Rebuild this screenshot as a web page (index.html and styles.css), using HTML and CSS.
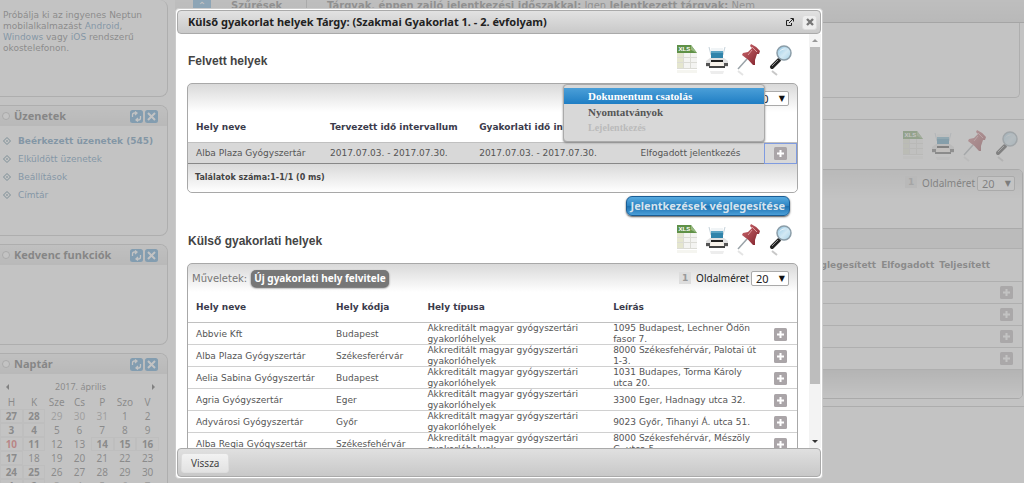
FILE: index.html
```html
<!DOCTYPE html>
<html lang="hu">
<head>
<meta charset="utf-8">
<title>Külső gyakorlat helyek</title>
<link rel="stylesheet" href="styles.css">
</head>
<body>
<svg class="sprite" aria-hidden="true">
  <defs>
    <linearGradient id="lens" x1="0" y1="0" x2="1" y2="1"><stop offset="0" stop-color="#8fc4e2"/><stop offset=".55" stop-color="#d3e9f4"/><stop offset="1" stop-color="#a4cfe6"/></linearGradient>
    <linearGradient id="pinred" x1="0" y1="0" x2="1" y2="1"><stop offset="0" stop-color="#cf6a70"/><stop offset="1" stop-color="#7e2029"/></linearGradient>
    <symbol id="i-xls" viewBox="0 0 20 34">
      <path d="M0 9h20v16H0z" fill="#f4f4f2"/>
      <path d="M0 9h6v16H0z" fill="#e5e6cf"/>
      <path d="M0 13.5h20M0 18.500h20M0 24.500h20M6.500 9v16M13.500 9v16" stroke="#dcdcd6" fill="none"/>
      <path d="M0 1h14l6 8H0z" fill="#5f9147"/><path d="M14 1v5l6 3z" fill="#94b87f"/>
      <text x="1.500" y="7" class="xls-text">XLS</text>
      <path d="M0 26h20v3H0z" fill="#efefe6" opacity=".6"/>
    </symbol>
    <symbol id="i-print" viewBox="0 0 24 34">
      <path d="M4 3l2 8M20 3l-2 8" stroke="#c5d2da" fill="none"/>
      <path d="M6 4h12v4H6z" fill="#f0f4f6"/><path d="M6 7h12v7H6z" fill="#3184ab"/><path d="M6 7h12v2H6z" fill="#5ca4c4"/>
      <path d="M5 14h14l4 3v6H1v-6z" fill="#e2e2e2"/><path d="M1 19h4v3H1zM19 19h4v3h-4z" fill="#555"/>
      <path d="M6 16h12v2H6z" fill="#222"/><path d="M6 18h12l1 4H5z" fill="#f7f2ea"/><path d="M4 22h16v2H4z" fill="#444"/>
      <path d="M5 27h14l-1 3H6z" fill="#ededed"/>
    </symbol>
    <symbol id="i-pin" viewBox="0 0 24 34">
      <path d="M1 25L10 15" stroke="#9aa3a8" stroke-width="1.500"/>
      <path d="M14 0q5 2 9 7l-1 3h-2l-2 6v5h-2Q11 15 5 11l1-2 5-1 4-4-2-2z" fill="url(#pinred)"/>
      <path d="M15 3l5 5M15 6l-4 5" stroke="#e09a9d" fill="none"/>
      <path d="M1 27l5 4" stroke="#e4e4e4" stroke-width="2"/>
    </symbol>
    <symbol id="i-find" viewBox="0 0 24 34">
      <path d="M3 23l7-7" stroke="#222" stroke-width="4" stroke-linecap="round"/><path d="M3 22l6-6" stroke="#999"/>
      <circle cx="15" cy="9" r="7" fill="url(#lens)" stroke="#8b9da8" stroke-width="1.500"/>
      <path d="M10 9q2-6 8-4-6 0-8 4z" fill="#fff" opacity=".8"/>
      <path d="M3 27l5 4" stroke="#c8c8c8" stroke-width="2"/>
    </symbol>
    <symbol id="i-refresh" viewBox="0 0 13 13"><rect width="13" height="13" rx="2.500" fill="#297fc0"/><path d="M2.500 7V5q0-2 2-2h2M5 1.500L7 3 5 5M10.500 6v2q0 2-2 2h-2M8 8L6 10l2 1.500" stroke="#fff" fill="none" stroke-width="1.300"/></symbol>
    <symbol id="i-close" viewBox="0 0 13 13"><rect width="13" height="13" rx="2.500" fill="#297fc0"/><path d="M3 3l7 7M10 3l-7 7" stroke="#fff" stroke-width="2"/></symbol>
    <symbol id="i-bullet" viewBox="0 0 8 8"><path d="M4 .5L7.500 4 4 7.500 .5 4z" fill="#fff" stroke="#0d4a66"/><path d="M4 3L5 4 4 5 3 4z" fill="#0d4a66"/></symbol>
    <symbol id="i-plus" viewBox="0 0 13 13"><rect width="13" height="13" rx="1.500" fill="#aaa5a8"/><path d="M6.500 3v7M3 6.500h7" stroke="#fff" stroke-width="2"/></symbol>
  </defs>
</svg>

<div class="page">
  <aside class="side">
    <section class="widget first">
      <p>Próbálja ki az ingyenes Neptun mobilalkalmazást <a href="#">Android</a>, <a href="#">Windows</a> vagy <a href="#">iOS</a> rendszerű okostelefonon.</p>
    </section>
    <section class="widget messages">
      <header><i class="dot"></i><h3>Üzenetek</h3><svg><use href="#i-refresh"/></svg><svg><use href="#i-close"/></svg></header>
      <ul>
        <li><svg><use href="#i-bullet"/></svg><a href="#"><b>Beérkezett üzenetek (545)</b></a></li>
        <li><svg><use href="#i-bullet"/></svg><a href="#">Elküldött üzenetek</a></li>
        <li><svg><use href="#i-bullet"/></svg><a href="#">Beállítások</a></li>
        <li><svg><use href="#i-bullet"/></svg><a href="#">Címtár</a></li>
      </ul>
    </section>
    <section class="widget favourites">
      <header><i class="dot"></i><h3>Kedvenc funkciók</h3><svg><use href="#i-refresh"/></svg><svg><use href="#i-close"/></svg></header>
    </section>
    <section class="widget calendar">
      <header><i class="dot"></i><h3>Naptár</h3><svg><use href="#i-refresh"/></svg><svg><use href="#i-close"/></svg></header>
      <div class="month"><i class="prev"></i><span>2017. április</span><i class="next"></i></div>
      <table>
        <thead><tr><th>H</th><th>K</th><th>Sze</th><th>Cs</th><th>P</th><th>Szo</th><th>V</th></tr></thead>
        <tbody>
          <tr><td class="ev">27</td><td class="ev">28</td><td class="off">29</td><td class="off">30</td><td class="off">31</td><td>1</td><td>2</td></tr>
          <tr><td class="ev">3</td><td class="ev">4</td><td>5</td><td>6</td><td>7</td><td>8</td><td>9</td></tr>
          <tr><td class="ev today">10</td><td class="ev">11</td><td>12</td><td>13</td><td class="ev">14</td><td class="ev">15</td><td class="ev">16</td></tr>
          <tr><td class="ev">17</td><td>18</td><td>19</td><td>20</td><td>21</td><td>22</td><td>23</td></tr>
          <tr><td class="ev">24</td><td class="ev">25</td><td>26</td><td>27</td><td>28</td><td>29</td><td>30</td></tr>
          <tr><td class="ev">1</td><td class="ev">2</td><td class="off">3</td><td class="off">4</td><td class="off">5</td><td class="off">6</td><td class="off">7</td></tr>
        </tbody>
      </table>
    </section>
  </aside>
  <main class="main">
    <div class="filters"><span class="toggle">⌃</span><b class="filter-title">Szűrések</b><span class="filter-text"><b>Tárgyak, éppen zajló jelentkezési időszakkal:</b> Igen <b>Jelentkezett tárgyak:</b> Nem</span></div>
    <div class="filter-body"></div>
    <div class="courses">
      <div class="tools"><svg class="xls"><use href="#i-xls"/></svg><svg><use href="#i-print"/></svg><svg><use href="#i-pin"/></svg><svg><use href="#i-find"/></svg></div>
      <div class="bg-panel">
        <div class="bg-bar"><span class="pageno">1</span><label for="size-bg">Oldalméret</label><span class="select"><select id="size-bg"><option>20</option></select></span></div>
        <div class="bg-band"></div>
        <div class="bg-head"><span>Véglegesített</span><span>Elfogadott</span><span>Teljesített</span></div>
        <div class="bg-row"><svg><use href="#i-plus"/></svg></div>
        <div class="bg-row"><svg><use href="#i-plus"/></svg></div>
        <div class="bg-row"><svg><use href="#i-plus"/></svg></div>
        <div class="bg-row"><svg><use href="#i-plus"/></svg></div>
        <div class="bg-foot"></div>
      </div>
    </div>
  </main>
</div>

<div class="overlay">
  <div class="dialog" role="dialog" aria-labelledby="dlg-title">
    <div class="titlebar">
      <h1 id="dlg-title">Külső gyakorlat helyek Tárgy: (Szakmai Gyakorlat 1. - 2. évfolyam)</h1>
      <button class="popout" aria-label="Új ablak"><svg viewBox="0 0 8 8"><path d="M3 2.500H.5v5h5V5M3 5l4-4M4.500.500h3v3" stroke="#222" fill="none"/></svg></button>
      <button class="close" aria-label="Bezárás"><svg viewBox="0 0 8 8"><path d="M1 1l6 6M7 1L1 7" stroke="#777" stroke-width="2.400"/></svg></button>
    </div>
    <div class="body">
      <div class="content">
        <div class="heading"><h2>Felvett helyek</h2><div class="tools"><svg class="xls"><use href="#i-xls"/></svg><svg><use href="#i-print"/></svg><svg><use href="#i-pin"/></svg><svg><use href="#i-find"/></svg></div></div>
        <div class="panel">
          <div class="bar"><span class="pageno">1</span><label for="size-1">Oldalméret</label><span class="select"><select id="size-1"><option>20</option></select></span></div>
          <table class="grid taken">
            <colgroup><col class="t1"><col class="t2"><col class="t3"><col><col class="act"></colgroup>
            <thead><tr><th>Hely neve</th><th>Tervezett idő intervallum</th><th>Gyakorlati idő intervallum</th><th></th><th></th></tr></thead>
            <tbody><tr><td>Alba Plaza Gyógyszertár</td><td>2017.07.03. - 2017.07.30.</td><td>2017.07.03. - 2017.07.30.</td><td>Elfogadott jelentkezés</td><td class="plus focus"><button aria-label="Lehetőségek"><svg><use href="#i-plus"/></svg></button></td></tr></tbody>
          </table>
          <div class="foot">Találatok száma:1-1/1 (0 ms)</div>
          <div class="menu" role="menu">
            <button role="menuitem" class="active">Dokumentum csatolás</button>
            <button role="menuitem">Nyomtatványok</button>
            <button role="menuitem" disabled>Lejelentkezés</button>
          </div>
        </div>
        <div class="final"><button>Jelentkezések véglegesítése</button></div>
        <div class="heading"><h2>Külső gyakorlati helyek</h2><div class="tools"><svg class="xls"><use href="#i-xls"/></svg><svg><use href="#i-print"/></svg><svg><use href="#i-pin"/></svg><svg><use href="#i-find"/></svg></div></div>
        <div class="panel">
          <div class="bar"><span class="ops">Műveletek:</span><button class="add">Új gyakorlati hely felvitele</button><span class="pageno">1</span><label for="size-2">Oldalméret</label><span class="select"><select id="size-2"><option>20</option></select></span></div>
          <table class="grid places">
            <colgroup><col class="p1"><col class="p2"><col class="p3"><col><col class="act"></colgroup>
            <thead><tr><th>Hely neve</th><th>Hely kódja</th><th>Hely típusa</th><th>Leírás</th><th></th></tr></thead>
            <tbody>
              <tr><td>Abbvie Kft</td><td>Budapest</td><td>Akkreditált magyar gyógyszertári gyakorlóhelyek</td><td>1095 Budapest, Lechner Ödön fasor 7.</td><td class="plus"><button aria-label="Lehetőségek"><svg><use href="#i-plus"/></svg></button></td></tr>
              <tr><td>Alba Plaza Gyógyszertár</td><td>Székesferérvár</td><td>Akkreditált magyar gyógyszertári gyakorlóhelyek</td><td>8000 Székesfehérvár, Palotai út 1-3.</td><td class="plus"><button aria-label="Lehetőségek"><svg><use href="#i-plus"/></svg></button></td></tr>
              <tr><td>Aelia Sabina Gyógyszertár</td><td>Budapest</td><td>Akkreditált magyar gyógyszertári gyakorlóhelyek</td><td>1031 Budapes, Torma Károly utca 20.</td><td class="plus"><button aria-label="Lehetőségek"><svg><use href="#i-plus"/></svg></button></td></tr>
              <tr><td>Agria Gyógyszertár</td><td>Eger</td><td>Akkreditált magyar gyógyszertári gyakorlóhelyek</td><td>3300 Eger, Hadnagy utca 32.</td><td class="plus"><button aria-label="Lehetőségek"><svg><use href="#i-plus"/></svg></button></td></tr>
              <tr><td>Adyvárosi Gyógyszertár</td><td>Győr</td><td>Akkreditált magyar gyógyszertári gyakorlóhelyek</td><td>9023 Győr, Tihanyi Á. utca 51.</td><td class="plus"><button aria-label="Lehetőségek"><svg><use href="#i-plus"/></svg></button></td></tr>
              <tr><td>Alba Regia Gyógyszertár</td><td>Székesfehérvár</td><td>Akkreditált magyar gyógyszertári gyakorlóhelyek</td><td>8000 Székesfehérvár, Mészöly G. utca 5.</td><td class="plus"><button aria-label="Lehetőségek"><svg><use href="#i-plus"/></svg></button></td></tr>
            </tbody>
          </table>
        </div>
      </div>
      <div class="scroll"><i class="up"></i><span class="thumb"></span><span class="track"></span><i class="down"></i></div>
    </div>
    <div class="buttons"><button>Vissza</button></div>
  </div>
</div>
</body>
</html>
```

FILE: styles.css
```css
* { box-sizing: border-box; }
body { margin: 0; height: 100vh; overflow: hidden; background: #fff; color: #444; font: 9px/11px "DejaVu Sans", Verdana, sans-serif; }
h1, h2, h3, p, ul { margin: 0; padding: 0; }
ul { list-style: none; }
a { text-decoration: none; }
button { font: inherit; border: 0; padding: 0; background: none; color: inherit; }
.sprite { position: absolute; width: 0; height: 0; }
.xls-text { font: bold 6px "Liberation Sans", sans-serif; fill: #fff; }

.page { display: flex; height: 100vh; overflow: hidden; }
.side { width: 168px; flex: none; display: flex; flex-direction: column; gap: 8px; }
.widget { flex: none; border: 1px solid #b8b8b8; border-left: 0; border-radius: 0 8px 8px 0; overflow: hidden; }
.widget header { height: 20px; display: flex; align-items: center; gap: 2px; padding: 0 9px 0 2px; background: linear-gradient(#f4f4f4, #dcdcdc); }
.widget header svg { width: 13px; height: 13px; flex: none; }
.widget h3 { flex: 1; margin-left: 2px; font: bold 11px/18px "Noto Sans", sans-serif; color: #333; }
.dot { width: 8px; height: 8px; border: 1px solid #aaa; background: #fff; border-radius: 50%; }
.first { height: 97px; border-top: 0; padding: 10px 4px 0 3px; }
.side a { color: #2a6a9c; }
.messages { height: 131px; }
.messages ul { padding: 6px 0 0 3px; }
.messages li { display: flex; align-items: center; gap: 7px; height: 18px; }
.messages li svg { width: 8px; height: 8px; }
.favourites { height: 101px; }
.month { display: flex; justify-content: space-between; align-items: center; height: 16px; margin: 5px 9px 0 3px; font: 9px/14px "Noto Sans", sans-serif; }
.prev, .next { border: 3px solid transparent; }
.prev { border-right-color: #222; }
.next { border-left-color: #222; }
.calendar table { width: 159px; table-layout: fixed; border-collapse: collapse; font: 10px/14px "Noto Sans", sans-serif; }
.calendar th, .calendar td { padding: 0; height: 14px; text-align: center; font-weight: normal; }
.calendar .ev { font-weight: bold; box-shadow: inset 0 0 0 1px #eee; }
.calendar .off { color: #888; }
.calendar .today { color: #d33; }

.main { flex: 1; min-width: 0; margin-left: 7px; }
.filters { height: 23px; display: flex; gap: 20px; padding-left: 18px; font: 10px/12px "DejaVu Sans", sans-serif; color: #555; background: linear-gradient(#eee, #dcdcdc); border-bottom: 1px solid #999; }
.toggle { width: 18px; height: 10px; color: #fff; background: #4b9bd2; text-align: center; }
.filter-title { width: 76px; border-right: 1px solid #aaa; }
.filter-body { height: 75px; margin-right: 4px; border: 1px solid #b8b8b8; border-top: 0; border-radius: 0 0 5px 5px; }
.courses { margin-top: 21px; padding-top: 10px; border: 1px solid #b5b5b5; border-width: 1px 0; padding-bottom: 7px; }
.tools { display: flex; justify-content: flex-end; gap: 8px; }
.tools svg { width: 24px; height: 34px; }
.tools .xls { width: 20px; }
.courses .tools { padding-right: 5px; height: 39px; }
.bg-panel { border: 1px solid #aaa; border-radius: 5px; margin-right: 1px; overflow: hidden; }
.bg-bar { height: 58px; display: flex; align-items: flex-start; justify-content: flex-end; padding: 6px 7px 0; background: linear-gradient(#ddd, #fff 30px); }
.bg-band { height: 20px; background: #e4e4e4; border-top: 1px solid #aaa; }
.bg-head { height: 34px; display: flex; justify-content: flex-end; align-items: center; gap: 5px; padding-right: 32px; border: 1px solid #bbb; border-width: 1px 0; font-weight: bold; }
.bg-row { height: 22px; display: flex; justify-content: flex-end; align-items: center; padding-right: 9px; border-bottom: 1px solid #bbb; }
.bg-row svg { width: 13px; height: 13px; }
.bg-foot { height: 28px; background: linear-gradient(#ccc, #fff); }

.overlay { position: fixed; inset: 0; display: flex; padding: 8px 201px 4px 175px; background: rgba(170, 170, 170, .7); }
.dialog { flex: 1; min-width: 0; display: flex; flex-direction: column; padding: 1px; background: #fff; border: 1px solid #ccc; border-radius: 4px; }
.titlebar { flex: none; height: 24px; display: flex; align-items: center; padding: 0 3px 0 10px; border: 1px solid #aaa; border-radius: 4px; background: linear-gradient(#e2e2e2, #c9c9c9); }
.titlebar h1 { flex: 1; font: bold 11px/14px "Noto Sans", sans-serif; color: #222; }
.titlebar svg { width: 8px; height: 8px; display: block; margin: auto; }
.close { width: 15px; height: 15px; margin-left: 8px; border: 1px solid #ddd; border-radius: 3px; background: #eee; }
.body { flex: 1; min-height: 0; display: flex; }
.content { flex: 1; min-width: 0; overflow: hidden; padding: 5px 11px 0 10px; }
.heading { display: flex; justify-content: space-between; align-items: center; height: 44px; padding: 0 5px 0 1px; }
.heading h2 { font: bold 12px/16px "Liberation Sans", Arial, sans-serif; color: #444; }
.panel { position: relative; border: 1px solid #a8a8a8; border-radius: 5px; background: linear-gradient(#d9d9d9, #fff 28px); }
.bar { height: 28px; display: flex; align-items: center; justify-content: flex-end; padding: 0 8px 0 4px; }
label { font: 10px/14px "Noto Sans", sans-serif; color: #222; }
.pageno { width: 12px; height: 12px; margin-right: 5px; text-align: center; font-weight: bold; line-height: 12px; color: #999; background: #ddd; }
.select { position: relative; margin-left: 2px; }
.select::after { content: "▼"; position: absolute; right: 4px; top: 3px; font-size: 8px; line-height: 10px; color: #111; }
select { display: block; appearance: none; width: 38px; height: 15px; padding: 0 4px; border: 1px solid #aaa; border-radius: 2px; background: #fff; color: #222; font: 11px/13px "Noto Sans", sans-serif; }
.ops { color: #777; font-size: 10px; }
.add { height: 17px; margin: 0 auto 0 4px; padding: 0 3px; border-radius: 5px; background: #777; color: #fff; font: bold 10px/15px "Noto Sans", sans-serif; box-shadow: 0 1px 2px #555; }
.grid { width: 100%; table-layout: fixed; border-collapse: collapse; }
.grid th { height: 31px; padding: 0 8px; text-align: left; color: #3b3b4b; white-space: nowrap; box-shadow: inset 0 -1px #c0c0c0; }
.grid td { height: 22px; padding: 0 6px 0 8px; color: #555; box-shadow: inset 0 -1px #d0d0d0; }
.t1 { width: 22%; } .t2 { width: 24.5%; } .t3 { width: 26.5%; }
.p1 { width: 23%; } .p2 { width: 15%; } .p3 { width: 30.5%; }
.act { width: 33px; }
.grid .plus { padding: 0; text-align: center; }
.plus button, .plus svg { display: block; width: 13px; height: 13px; margin: auto; }
.taken td { height: 21px; background: #d8d8d8; box-shadow: inset 0 -1px #888; }
.taken .focus { box-shadow: inset 0 0 0 1px #7f9be0; }
.foot { height: 28px; padding: 0 7px; font: bold 8px/28px "DejaVu Sans", sans-serif; background: linear-gradient(#d9d9d9, #fff); border-radius: 0 0 5px 5px; }
.menu { position: absolute; right: 32px; top: 0; width: 202px; padding: 3px 0 5px; border: 1px solid #aaa; border-radius: 4px; background: #d8d8d8; box-shadow: 0 1px 2px #888; }
.menu button { display: block; width: 100%; height: 16px; padding-left: 24px; text-align: left; font: bold 11px/16px "Liberation Serif", serif; color: #555; }
.menu .active { background: linear-gradient(#4b9fd8, #1f7ec4); color: #fff; }
.menu button:disabled { font-size: 10px; color: #bbb; }
.final { display: flex; justify-content: flex-end; padding: 3px 8px 3px; }
.final button { height: 20px; padding: 0 4px; border-radius: 6px; border: 1px solid #1a5d94; background: linear-gradient(#58abe0, #2c83c2 50%, #1c70b0 50%, #4b9fd8); color: #d6e4ee; font: bold 11px/16px "Noto Sans", sans-serif; box-shadow: 0 1px 2px #555; }
.scroll { width: 12px; flex: none; display: flex; flex-direction: column; align-items: center; background: #f3f3f3; }
.thumb { width: 10px; flex: 337; background: #bdbdbd; }
.track { flex: 51; }
.up, .down { flex: none; margin: 5px 0; border: 3px solid transparent; }
.up { border-top: 0; border-bottom-color: #999; }
.down { border-bottom: 0; border-top-color: #333; }
.buttons { flex: none; height: 29px; display: flex; align-items: center; padding: 0 3px; border: 1px solid #aaa; border-radius: 4px; background: linear-gradient(#e0e0e0, #c8c8c8); }
.buttons button { height: 20px; padding: 0 9px; border: 1px solid #ddd; border-radius: 3px; background: linear-gradient(#f2f2f2, #e2e2e2); color: #444; font: 10px/16px "Noto Sans", sans-serif; }
```
